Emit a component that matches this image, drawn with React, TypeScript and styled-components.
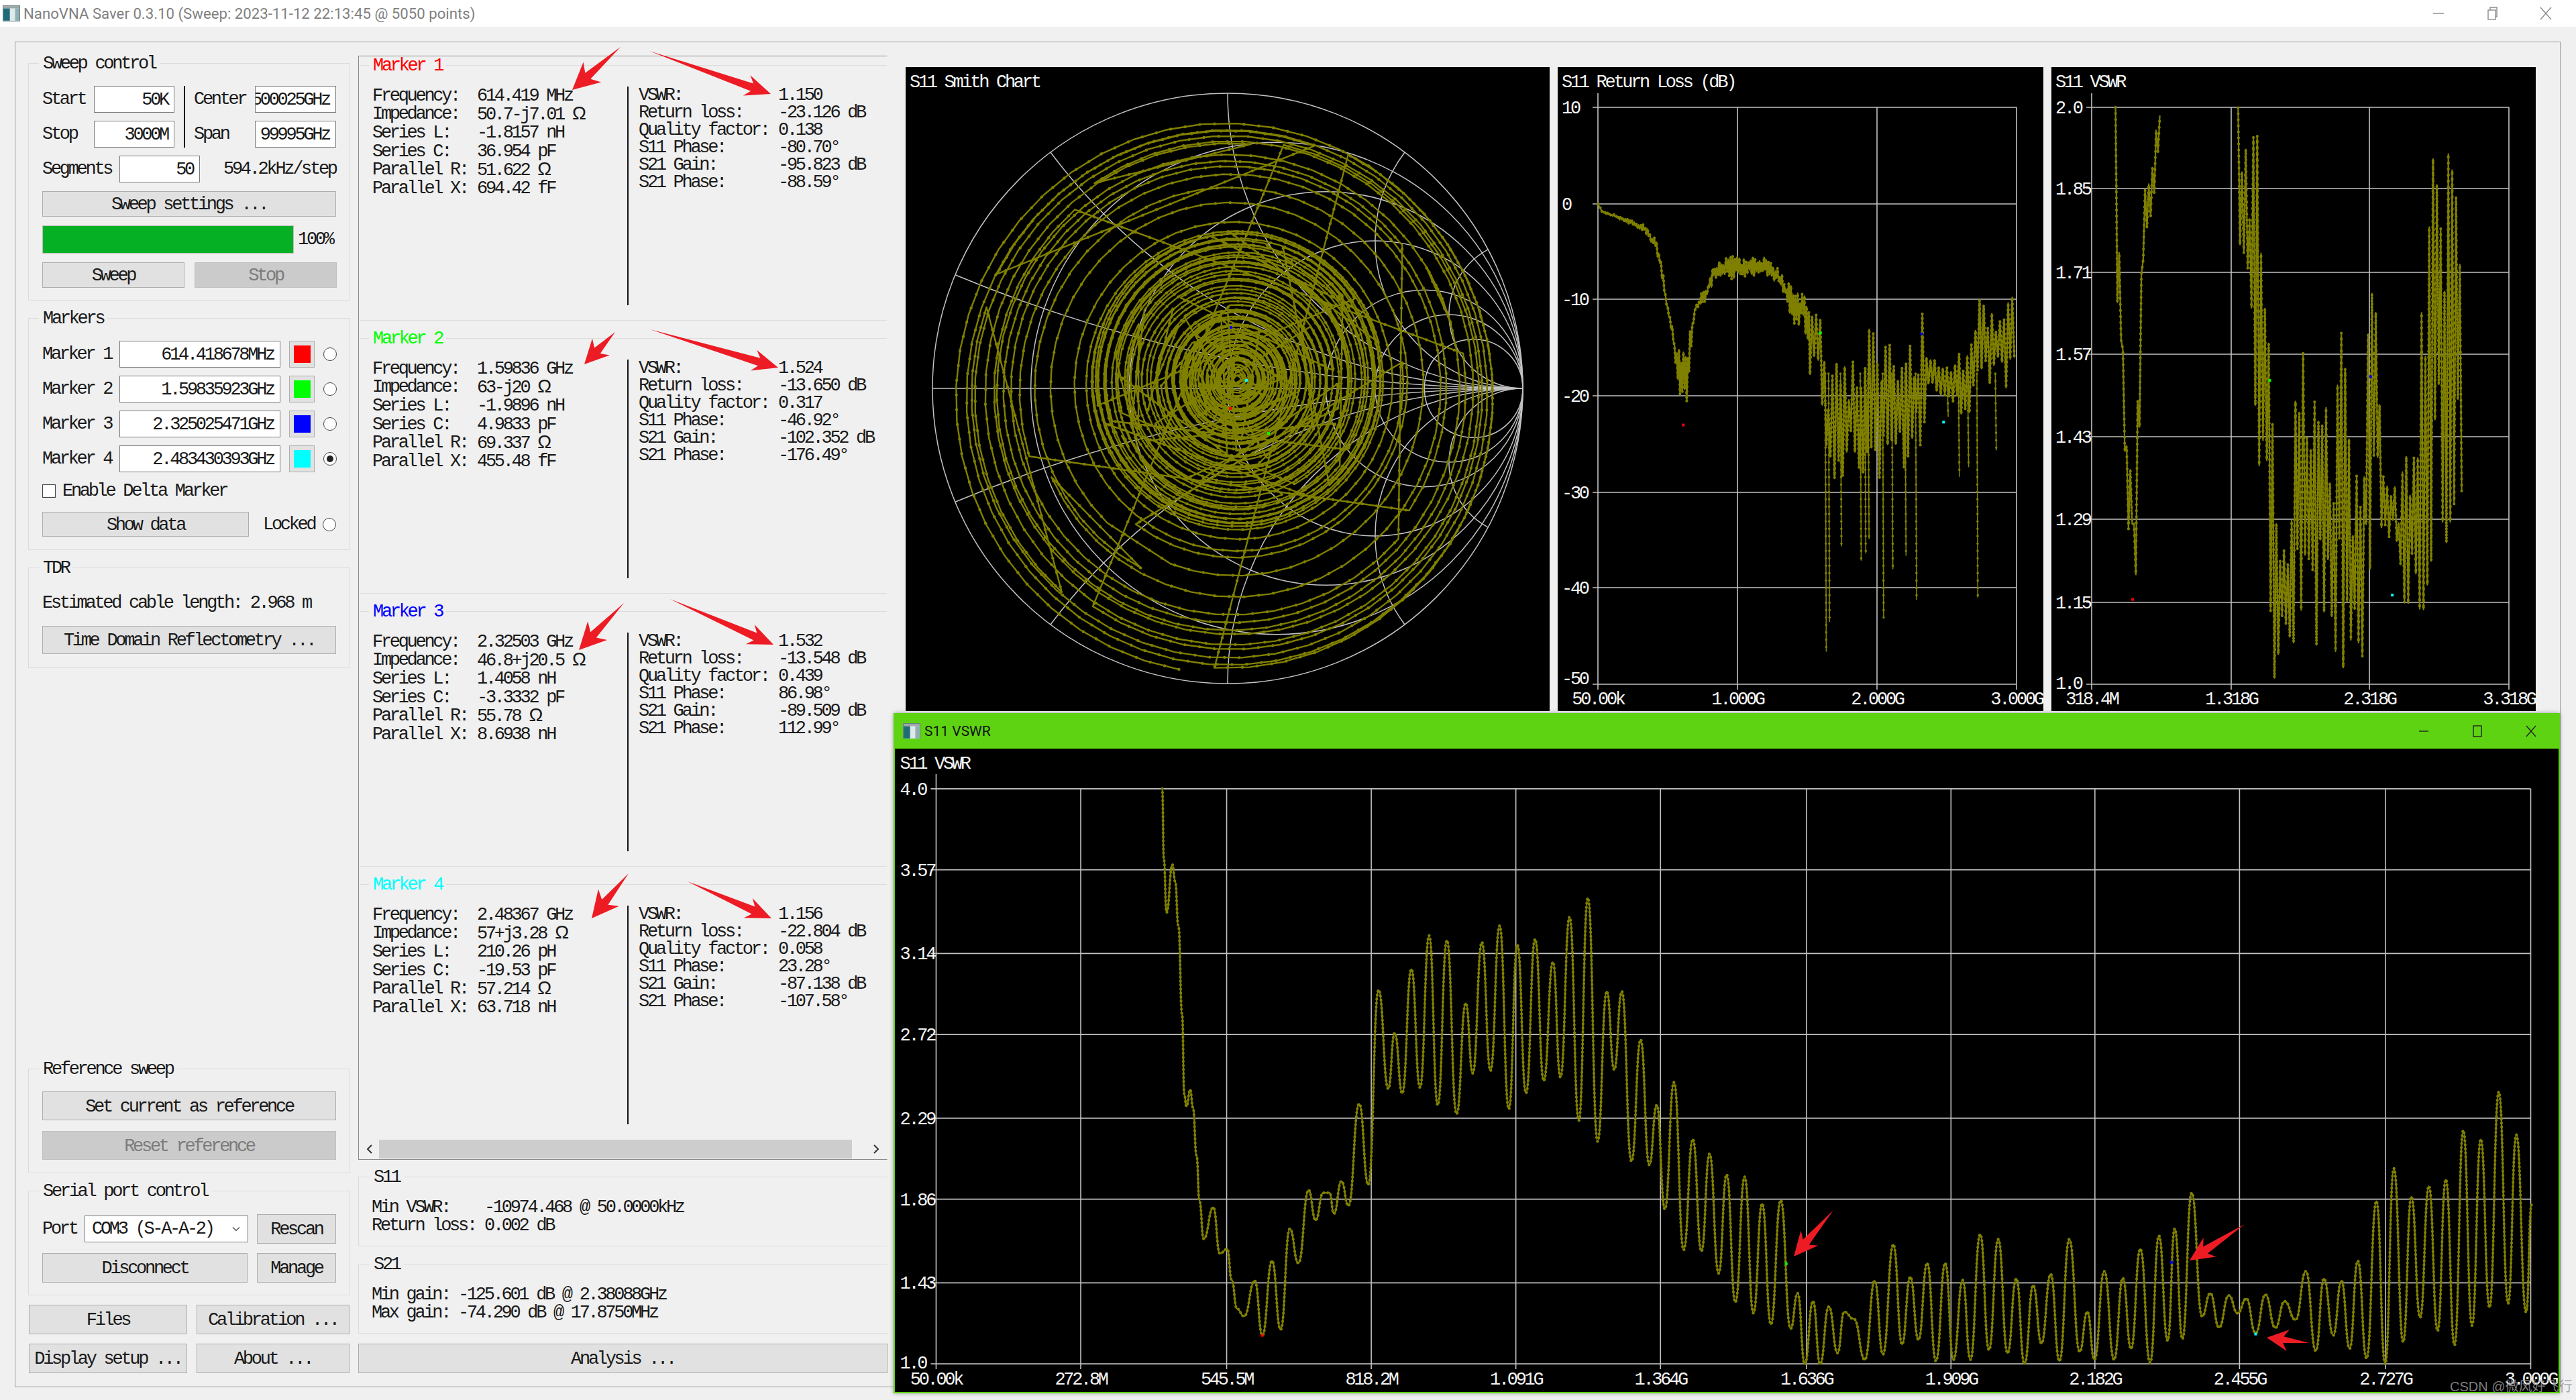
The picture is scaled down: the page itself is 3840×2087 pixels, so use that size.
import React, { useMemo } from "react";
import styled, { createGlobalStyle } from "styled-components";

const Global = createGlobalStyle`
  html, body { margin: 0; padding: 0; background: #f0f0f0; overflow: hidden; }
  * { box-sizing: border-box; }
`;

const MONO = `"Liberation Mono", "DejaVu Sans Mono", monospace`;
const OLIVE = "#808000";
const GRID = "#c2c2c2";

const Page = styled.div`
  position: relative;
  width: 3840px;
  height: 2087px;
  overflow: hidden;
  background: #f0f0f0;
  color: #1a1a1a;
  font-family: ${MONO};
  font-size: 27px;
  letter-spacing: -3.3px;
  line-height: 26px;
  white-space: pre;
`;

const TitleBar = styled.div`
  height: 40px;
  background: #fff;
  display: flex;
  align-items: center;
  padding: 0 0 0 4px;
  gap: 5px;
  font-family: "Roboto", "Liberation Sans", sans-serif;
  font-size: 22.2px;
  letter-spacing: 0;
  color: #808080;
`;
const TitleText = styled.span`
  flex: 1;
`;
const WinControls = styled.div`
  display: flex;
  align-items: center;
  gap: 56px;
  margin-right: 33px;
`;
const Frame = styled.div`
  margin: 22px 23px 0 22px;
  height: 2006px;
  border: 1px solid #9c9c9c;
  background: #f0f0f0;
  display: flex;
  padding-left: 19px;
`;

const LeftCol = styled.div`
  width: 480px;
  flex: none;
  display: flex;
  flex-direction: column;
  padding: 31px 0 20px;
`;
const MidCol = styled.div`
  width: 789px;
  flex: none;
  margin-left: 12px;
  display: flex;
  flex-direction: column;
  padding: 20px 0 20px;
`;
const ChartRow = styled.div`
  margin: 37px 0 0 27px;
  display: flex;
  gap: 12px;
  align-items: flex-start;
`;

const Group = styled.div<{ $h: number; $top?: number }>`
  height: ${(p) => p.$h}px;
  margin-top: ${(p) => p.$top ?? 0}px;
  border: 1px solid #dcdcdc;
  padding: 0 20px;
  flex: none;
`;
const Legend = styled.div<{ $color?: string }>`
  width: fit-content;
  height: 26px;
  margin: -13px 0 0 -5px;
  padding: 0 6px;
  background: #f0f0f0;
  color: ${(p) => p.$color ?? "#1a1a1a"};
`;
const Spacer = styled.div`
  flex: 1;
`;

const SweepGrid = styled.div`
  margin-top: 20px;
  display: grid;
  grid-template-columns: 77px 120px 29px 91px 121px;
  grid-auto-rows: 40px;
  row-gap: 12px;
  align-items: center;
`;
const VLine = styled.div`
  grid-row: 1 / span 2;
  grid-column: 3;
  justify-self: center;
  width: 2px;
  height: 92px;
  background: #000;
`;
const Field = styled.div<{ $w?: number }>`
  width: ${(p) => (p.$w ? `${p.$w}px` : "100%")};
  height: 40px;
  background: #fff;
  border: 1px solid #7a7a7a;
  padding: 1px 9px 0 0;
  display: flex;
  align-items: center;
  justify-content: flex-end;
  overflow: hidden;
  flex: none;
`;
const FieldText = styled.span`
  flex: none;
`;
const SegRow = styled.div`
  margin-top: 12px;
  display: flex;
  align-items: center;
  height: 40px;
`;
const SegLabel = styled.span`
  width: 115px;
  flex: none;
`;
const StepText = styled.span`
  margin-left: 35px;
`;
const Btn = styled.div<{ $h?: number; $w?: number; $off?: boolean; $top?: number }>`
  width: ${(p) => (p.$w ? `${p.$w}px` : "100%")};
  height: ${(p) => p.$h ?? 38}px;
  margin-top: ${(p) => p.$top ?? 0}px;
  padding-top: 2px;
  flex: none;
  background: ${(p) => (p.$off ? "#cbcbcb" : "#e1e1e1")};
  border: 1px solid ${(p) => (p.$off ? "#c0c0c0" : "#adadad")};
  color: ${(p) => (p.$off ? "#7c7c7c" : "#1a1a1a")};
  display: flex;
  align-items: center;
  justify-content: center;
`;
const ProgressRow = styled.div`
  margin-top: 13px;
  display: flex;
  align-items: center;
  gap: 6px;
  height: 42px;
`;
const Progress = styled.div`
  width: 375px;
  height: 42px;
  background: #06b025;
  border: 1px solid #bcbcbc;
`;
const TwoBtns = styled.div`
  margin-top: 13px;
  display: flex;
  gap: 15px;
`;
const MarkerGrid = styled.div`
  margin-top: 20px;
  display: grid;
  grid-template-columns: 102px 240px 38px 20px;
  grid-auto-rows: 40px;
  column-gap: 13px;
  row-gap: 12px;
  align-items: center;
`;
const ColorBtn = styled.div<{ $c: string }>`
  width: 38px;
  height: 40px;
  background: #e1e1e1;
  border: 1px solid #adadad;
  display: flex;
  align-items: center;
  justify-content: center;
  &::after {
    content: "";
    width: 25px;
    height: 26px;
    background: ${(p) => p.$c};
  }
`;
const Radio = styled.div<{ $on?: boolean }>`
  width: 20px;
  height: 20px;
  flex: none;
  border-radius: 50%;
  background: #fff;
  border: 1px solid #444;
  display: flex;
  align-items: center;
  justify-content: center;
  &::after {
    content: "";
    width: 10px;
    height: 10px;
    border-radius: 50%;
    background: ${(p) => (p.$on ? "#222" : "transparent")};
  }
`;
const CheckRow = styled.div`
  margin-top: 18px;
  height: 20px;
  display: flex;
  align-items: center;
  gap: 10px;
`;
const Check = styled.div`
  width: 20px;
  height: 20px;
  flex: none;
  background: #fff;
  border: 1px solid #444;
`;
const ShowRow = styled.div`
  margin-top: 21px;
  display: flex;
  align-items: center;
`;
const LockText = styled.span`
  margin: 0 12px 0 21px;
`;
const Line = styled.div<{ $top?: number }>`
  height: 26px;
  margin-top: ${(p) => p.$top ?? 0}px;
`;
const PortRow = styled.div`
  margin-top: 21px;
  display: flex;
  align-items: center;
  gap: 13px;
`;
const PortLabel = styled.span`
  width: 63px;
  margin-right: -13px;
  flex: none;
`;
const Combo = styled.div`
  width: 244px;
  height: 40px;
  flex: none;
  background: #fff;
  border: 1px solid #7a7a7a;
  padding: 0 10px;
  display: flex;
  align-items: center;
  justify-content: space-between;
`;
const DiscRow = styled.div`
  margin-top: 14px;
  display: flex;
  gap: 14px;
`;
const BottomGrid = styled.div`
  margin: 14px 0 0 1px;
  display: grid;
  grid-template-columns: 236px 228px;
  grid-auto-rows: 44px;
  column-gap: 14px;
  row-gap: 14px;
`;

const ScrollPanel = styled.div`
  height: 1646px;
  flex: none;
  border: 1px solid #8a8a8a;
  border-right-color: #f0f0f0;
  display: flex;
  flex-direction: column;
`;
const ScrollArea = styled.div`
  flex: 1;
  min-height: 0;
  overflow: hidden;
  padding-top: 13px;
`;
const MarkerBox = styled.div`
  height: 381px;
  margin-bottom: 26px;
  margin-left: 1px;
  border-top: 1px solid #dcdcdc;
  border-bottom: 1px solid #dcdcdc;
  padding-left: 19px;
`;
const MarkerBody = styled.div`
  margin-top: 18px;
  display: grid;
  grid-template-columns: 380px 2px 1fr;
`;
const LeftStats = styled.div`
  display: grid;
  grid-template-columns: 156px 1fr;
  grid-auto-rows: 27.6px;
  align-items: center;
  align-content: start;
`;
const RightStats = styled.div`
  padding-left: 15px;
  display: grid;
  grid-template-columns: 208px 1fr;
  grid-auto-rows: 26px;
  align-items: center;
  align-content: start;
`;
const Divider = styled.div`
  width: 2px;
  height: 326px;
  background: #111;
`;
const Ohm = styled.span`
  font-family: "Liberation Sans", sans-serif;
  font-size: 28px;
  letter-spacing: 0;
`;
const ScrollBar = styled.div`
  height: 31px;
  flex: none;
  display: flex;
  align-items: center;
  padding: 0 10px;
  background: #f0f0f0;
  svg:last-child {
    margin-left: auto;
  }
`;
const Thumb = styled.div`
  width: 705px;
  height: 28px;
  margin-left: 8px;
  background: #cdcdcd;
`;
const SumGroup = styled.div<{ $top: number }>`
  height: 104px;
  flex: none;
  margin-top: ${(p) => p.$top}px;
  border-top: 1px solid #dcdcdc;
  border-bottom: 1px solid #dcdcdc;
  border-left: 1px solid #dcdcdc;
  padding-left: 20px;
`;
const SumLegend = styled(Legend)`
  margin-left: -4px;
`;
const SumBody = styled.div`
  margin: 19px 0 0 -1px;
`;
const SumRow = styled.div`
  height: 26.5px;
  display: flex;
  align-items: center;
`;
const SumLabel = styled.span`
  width: 168px;
  flex: none;
`;

const ChartBox = styled.div<{ $w: number; $h: number }>`
  width: ${(p) => p.$w}px;
  height: ${(p) => p.$h}px;
  flex: none;
  background: #000;
`;
const ChartSvg = styled.svg<{ $grow?: boolean }>`
  display: block;
  width: 100%;
  height: 100%;
  ${(p) => (p.$grow ? "flex: 1; min-height: 0;" : "")}
  text {
    fill: #f4f4f4;
    font-family: ${MONO};
    font-size: 27px;
    letter-spacing: -3.3px;
    white-space: pre;
  }
`;

const ChildWindow = styled.div`
  position: absolute;
  left: 1332px;
  top: 1063px;
  width: 2484px;
  height: 1014px;
  background: #000;
  border: 2px solid #5dd312;
  border-top: none;
  box-shadow: 0 0 6px rgba(0, 0, 0, 0.35);
  display: flex;
  flex-direction: column;
`;
const ChildTitle = styled.div`
  height: 53px;
  flex: none;
  margin: 0 -2px;
  background: #5dd312;
  display: flex;
  align-items: center;
  padding: 0 0 0 14px;
  gap: 6px;
  font-family: "Roboto", "Liberation Sans", sans-serif;
  font-size: 21px;
  letter-spacing: 0;
  color: #111;
`;
const ChildControls = styled.div`
  margin-left: auto;
  display: flex;
  align-items: center;
  gap: 60px;
  margin-right: 33px;
`;
const Watermark = styled.div`
  position: absolute;
  left: 3652px;
  top: 2053px;
  font-family: "Liberation Sans", "Noto Sans CJK SC", sans-serif;
  font-size: 20px;
  letter-spacing: 0;
  color: rgba(150, 150, 150, 0.85);
  line-height: 28px;
`;
const ArrowLayer = styled.svg`
  position: absolute;
  left: 0;
  top: 0;
  width: 3840px;
  height: 2087px;
  pointer-events: none;
`;

/* ---------- data helpers ---------- */
type Pt = [number, number];

function prng(seed: number) {
  let s = seed;
  return () => {
    s = (s * 16807) % 2147483647;
    return (s - 1) / 2147483646;
  };
}

function arrowPoints(t: Pt, p: Pt, L = 40, hw = 20, neck = 6) {
  const dx = p[0] - t[0];
  const dy = p[1] - t[1];
  const len = Math.hypot(dx, dy);
  const d: Pt = [dx / len, dy / len];
  const n: Pt = [-d[1], d[0]];
  const at = (back: number, side: number) =>
    `${(p[0] - d[0] * back + n[0] * side).toFixed(1)},${(p[1] - d[1] * back + n[1] * side).toFixed(1)}`;
  return [
    at(0, 0),
    at(L, hw),
    at(L * 0.78, neck),
    `${t[0]},${t[1]}`,
    at(L * 0.78, -neck),
    at(L, -hw),
  ].join(" ");
}

const ARROWS: { t: Pt; p: Pt; L?: number; hw?: number; neck?: number }[] = [
  { t: [925, 70], p: [853, 134] },
  { t: [968, 76], p: [1149, 140], L: 38, hw: 16 },
  { t: [917, 495], p: [871, 543], L: 36, hw: 18 },
  { t: [969, 491], p: [1160, 548], L: 38, hw: 16 },
  { t: [930, 899], p: [863, 969] },
  { t: [999, 893], p: [1153, 961], L: 38, hw: 16 },
  { t: [937, 1302], p: [882, 1369] },
  { t: [1025, 1314], p: [1150, 1369], L: 38, hw: 16 },
  { t: [2733, 1804], p: [2674, 1873], L: 36, hw: 17 },
  { t: [3346, 1825], p: [3264, 1879], L: 36, hw: 17 },
  { t: [3442, 2002], p: [3379, 1994], L: 32, hw: 16, neck: 5 },
];

function smithGrid(cx: number, cy: number, R: number) {
  const circles = [0.2, 0.5, 1, 2, 3, 5].map((r) => ({
    cx: cx + (R * r) / (1 + r),
    cy,
    r: R / (1 + r),
  }));
  const arcs: string[] = [];
  for (const x of [0.2, 0.5, 1, 2, 4]) {
    const gx = (x * x - 1) / (x * x + 1);
    const gy = (2 * x) / (x * x + 1);
    const r = R / x;
    arcs.push(`M${cx + R} ${cy}A${r} ${r} 0 0 1 ${cx + gx * R} ${cy - gy * R}`);
    arcs.push(`M${cx + R} ${cy}A${r} ${r} 0 0 0 ${cx + gx * R} ${cy + gy * R}`);
  }
  return { circles, arcs };
}

function smithTrace() {
  const rnd = prng(4242);
  const radii = [
    404, 396, 388, 383, 371, 365, 352, 344, 333, 320, 300, 276, 250, 232, 219, 216, 213, 210, 206, 203,
    199, 195, 190, 186, 182, 176, 170, 166, 162, 158, 152, 146, 140, 135, 130, 125, 120, 116, 112, 106,
    102, 98, 95, 92, 89, 86, 83, 80, 77, 75, 72, 70, 67, 65, 62, 60, 57, 55, 52, 50, 47, 45, 42, 40, 37,
    35, 32, 30, 27, 25, 22, 18, 14, 10, 6,
  ];
  const pts: string[] = [];
  radii.forEach((r0, i) => {
    const r1 = radii[i + 1] ?? r0;
    const k = Math.min(1, Math.max(0, (404 - r0) / 190));
    const cx = 1830 + k * 14 + (rnd() - 0.5) * 6;
    const cy = 589 - k * 23 + (rnd() - 0.5) * 6;
    const ph = rnd() * 6.28;
    for (let a = 0; a < 48; a++) {
      const t = a / 48;
      const th = ph + t * Math.PI * 2;
      const rr = r0 + (r1 - r0) * t;
      const x = cx + rr * Math.cos(th);
      const y = cy + rr * 1.02 * Math.sin(th);
      pts.push(`${x.toFixed(1)} ${y.toFixed(1)}`);
    }
  });
  return `M${pts.join("L")}`;
}

type Env = [number, number, number];
function bandPath(
  env: Env[],
  step: (x: number) => number,
  seed: number,
  map: (x: number, y: number) => Pt
) {
  const rnd = prng(seed);
  const out: string[] = [];
  let seg = 0;
  let up = false;
  const end = env[env.length - 1][0];
  for (let x = env[0][0]; x <= end; x += step(x)) {
    while (seg < env.length - 2 && env[seg + 1][0] < x) seg++;
    const a = env[seg];
    const b = env[seg + 1];
    const t = Math.min(1, (x - a[0]) / (b[0] - a[0]));
    const hi = a[1] + (b[1] - a[1]) * t;
    const lo = a[2] + (b[2] - a[2]) * t;
    up = !up;
    const span = lo - hi;
    const y = up ? hi + span * rnd() * 0.42 : lo - span * rnd() * 0.42;
    const [px, py] = map(x, y);
    out.push(`${px.toFixed(1)} ${py.toFixed(1)}`);
  }
  return `M${out.join("L")}`;
}

const z4 = (x: number, y: number): Pt => [2300 + x / 1.018, y / 1.4];

const RL_ENV: Env[] = [
  [84, 425, 428], [90, 440, 445], [110, 448, 455], [130, 458, 468], [155, 470, 485], [172, 500, 525],
  [180, 545, 575], [187, 620, 640], [195, 665, 690], [203, 720, 800], [213, 700, 885], [220, 700, 850],
  [226, 670, 700], [232, 630, 650], [250, 590, 625], [260, 550, 580], [280, 535, 585], [310, 535, 580],
  [340, 528, 575], [360, 565, 600], [380, 600, 680], [395, 605, 680], [405, 640, 800], [420, 640, 830],
  [430, 770, 1000], [440, 780, 1000], [455, 720, 1030], [480, 690, 1000], [505, 660, 1000], [530, 670, 1000],
  [560, 680, 1000], [580, 630, 910], [590, 750, 810], [610, 750, 830], [630, 720, 880], [650, 700, 900],
  [665, 610, 840], [690, 600, 830], [705, 580, 820], [718, 610, 790],
];
const RL_SPIKES: Pt[] = [
  [430, 1360], [435, 1298], [453, 1140], [483, 1170], [490, 1155], [495, 1125], [517, 1290], [531, 1188],
  [551, 1160], [567, 1252], [632, 995], [646, 975], [660, 1247], [688, 940], [615, 870],
];
const SW_A: Env[] = [
  [869, 224, 640], [873, 430, 640], [878, 640, 730], [882, 730, 1000], [886, 900, 1100], [893, 1000, 1120],
  [897, 1000, 1250], [901, 770, 1200], [907, 570, 790], [912, 340, 520], [920, 330, 470], [928, 270, 420], [938, 224, 300],
];
const SW_B: Env[] = [
  [1055, 224, 450], [1065, 224, 700], [1075, 224, 850], [1085, 240, 1030], [1095, 400, 1110], [1100, 390, 1180],
  [1110, 1060, 1420], [1118, 1090, 1350], [1130, 1100, 1300], [1138, 900, 1380], [1148, 670, 1390], [1160, 790, 1290],
  [1180, 600, 1400], [1190, 640, 1390], [1200, 870, 1400], [1215, 640, 1400], [1225, 950, 1390], [1240, 900, 1400],
  [1252, 610, 1300], [1258, 570, 1270], [1265, 340, 1000], [1272, 980, 1100], [1280, 1000, 1150], [1292, 985, 1100],
  [1300, 1050, 1240], [1310, 850, 1335], [1320, 900, 1250], [1328, 780, 1380], [1338, 400, 1390], [1345, 224, 1290],
  [1360, 260, 1140], [1372, 224, 1180], [1385, 224, 1140], [1397, 224, 1110],
];

const Z5: Pt[] = [
  [511, 190], [514, 350], [519, 470], [530, 362], [535, 400], [541, 500], [548, 700], [552, 880], [556, 908], [563, 870],
  [568, 910], [575, 1020], [580, 1120], [588, 1207], [606, 1136], [618, 1240], [632, 1230], [640, 1300], [650, 1365],
  [663, 1382], [683, 1302], [697, 1425], [715, 1257], [731, 1412], [748, 1184], [764, 1262], [783, 1097], [796, 1165],
  [810, 1103], [822, 1103], [830, 1150], [844, 1077], [857, 1132], [877, 902], [894, 1085], [913, 645], [931, 868],
  [943, 742], [957, 878], [974, 598], [990, 865], [1007, 522], [1023, 905], [1040, 533], [1058, 925], [1075, 675],
  [1088, 833], [1105, 537], [1121, 827], [1138, 500], [1155, 914], [1171, 543], [1187, 878], [1204, 530], [1220, 850],
  [1237, 582], [1251, 842], [1268, 480], [1285, 940], [1302, 437], [1320, 987], [1337, 648], [1351, 825], [1365, 648],
  [1383, 1032], [1400, 757], [1416, 1040], [1430, 905], [1445, 1140], [1462, 853], [1480, 1232], [1497, 982],
  [1513, 1235], [1528, 1015], [1545, 1285],
];
const Z6: Pt[] = [
  [17, 1062], [33, 1350], [50, 1067], [66, 1375], [82, 1128], [98, 1400], [116, 1120], [134, 1410], [147, 1330], [160, 1490],
  [175, 1348], [188, 1490], [204, 1360], [220, 1465], [232, 1372], [250, 1388], [270, 1480], [288, 1302], [303, 1468],
  [322, 1220], [338, 1445], [353, 1293], [368, 1435], [384, 1262], [400, 1483], [417, 1262], [432, 1480], [449, 1300],
  [463, 1480], [481, 1197], [497, 1458], [514, 1208], [531, 1465], [547, 1297], [562, 1490], [578, 1312], [593, 1443],
  [610, 1287], [626, 1483], [644, 1208], [663, 1462], [677, 1372], [690, 1480], [708, 1280], [726, 1480], [742, 1296],
  [757, 1455], [774, 1230], [792, 1487], [808, 1200], [824, 1437], [837, 1184], [851, 1433], [868, 1103], [887, 1382],
  [902, 1330], [918, 1407], [936, 1335], [952, 1375], [968, 1342], [985, 1420], [1003, 1333], [1021, 1408], [1038, 1348],
  [1058, 1390], [1077, 1280], [1095, 1460], [1110, 1297], [1127, 1425], [1142, 1302], [1157, 1455], [1172, 1257],
  [1188, 1477], [1206, 1122], [1222, 1490], [1238, 1048], [1255, 1440], [1270, 1112], [1286, 1385], [1302, 1088],
  [1318, 1415], [1333, 1073], [1349, 1447], [1365, 962], [1381, 1403], [1397, 982], [1413, 1362], [1430, 875],
  [1447, 1353], [1462, 972], [1480, 1373], [1490, 1130],
];
const z5 = (p: Pt): Pt => [1320 + p[0] / 1.244, 1050 + p[1] / 1.512];
const z6 = (p: Pt): Pt => [2560 + p[0] / 1.225, 1050 + p[1] / 1.512];

function smoothPath(pts: Pt[]) {
  let d = `M${pts[0][0].toFixed(1)} ${pts[0][1].toFixed(1)}`;
  for (let i = 1; i < pts.length; i++) {
    const [x0, y0] = pts[i - 1];
    const [x1, y1] = pts[i];
    const m = (x0 + x1) / 2;
    d += `C${m.toFixed(1)} ${y0.toFixed(1)} ${m.toFixed(1)} ${y1.toFixed(1)} ${x1.toFixed(1)} ${y1.toFixed(1)}`;
  }
  return d;
}

const Trace: React.FC<{ d: string; w?: number; dash?: number }> = ({ d, w = 2, dash = 9 }) => (
  <g fill="none" stroke={OLIVE} strokeLinejoin="round">
    <path d={d} strokeWidth={w} />
    <path d={d} strokeWidth={w + 2} strokeLinecap="round" strokeDasharray={`0.01 ${dash}`} />
  </g>
);

const Dot: React.FC<{ p: Pt; c: string }> = ({ p, c }) => <rect x={p[0] - 2} y={p[1] - 2} width={4} height={4} fill={c} />;

interface PlotProps {
  ys: { y: number; t: string; ty?: number }[];
  xs: { x: number; t: string }[];
  axisX: number;
  top: number;
  bottom: number;
  right: number;
  labelX: number;
  labelY: number;
  axisTop: number;
}
const Plot: React.FC<PlotProps> = ({ ys, xs, axisX, top, bottom, right, labelX, labelY, axisTop }) => (
  <>
    <g stroke={GRID} strokeWidth={1.6}>
      <line x1={axisX} x2={axisX} y1={axisTop} y2={bottom + 8} />
      {xs.slice(1).map((v) => (
        <line key={v.x} x1={v.x} x2={v.x} y1={top} y2={bottom + 8} />
      ))}
      {ys.map((v) => (
        <line key={v.y} x1={axisX - 8} x2={right} y1={v.y} y2={v.y} />
      ))}
    </g>
    {ys.map((v) => (
      <text key={v.t} x={labelX} y={v.y + 9 + (v.ty ?? 0)}>
        {v.t}
      </text>
    ))}
    {xs.map((v) => (
      <text key={v.t} x={v.x} y={labelY} textAnchor="middle">
        {v.t}
      </text>
    ))}
  </>
);

/* ---------- content ---------- */
const OHM = "Ω";
const MARKERS = [
  {
    name: "Marker 1", color: "#ff0000",
    left: ["614.419 MHz", `50.7-j7.01 ${OHM}`, "-1.8157 nH", "36.954 pF", `51.622 ${OHM}`, "694.42 fF"],
    right: ["1.150", "-23.126 dB", "0.138", "-80.70°", "-95.823 dB", "-88.59°"],
  },
  {
    name: "Marker 2", color: "#00ff00",
    left: ["1.59836 GHz", `63-j20 ${OHM}`, "-1.9896 nH", "4.9833 pF", `69.337 ${OHM}`, "455.48 fF"],
    right: ["1.524", "-13.650 dB", "0.317", "-46.92°", "-102.352 dB", "-176.49°"],
  },
  {
    name: "Marker 3", color: "#0000ff",
    left: ["2.32503 GHz", `46.8+j20.5 ${OHM}`, "1.4058 nH", "-3.3332 pF", `55.78 ${OHM}`, "8.6938 nH"],
    right: ["1.532", "-13.548 dB", "0.439", "86.98°", "-89.509 dB", "112.99°"],
  },
  {
    name: "Marker 4", color: "#00ffff",
    left: ["2.48367 GHz", `57+j3.28 ${OHM}`, "210.26 pH", "-19.53 pF", `57.214 ${OHM}`, "63.718 nH"],
    right: ["1.156", "-22.804 dB", "0.058", "23.28°", "-87.138 dB", "-107.58°"],
  },
];
const LEFT_LABELS = ["Frequency:", "Impedance:", "Series L:", "Series C:", "Parallel R:", "Parallel X:"];
const RIGHT_LABELS = ["VSWR:", "Return loss:", "Quality factor:", "S11 Phase:", "S21 Gain:", "S21 Phase:"];
const MARKER_INPUTS: [string, string, string, boolean][] = [
  ["Marker 1", "614.418678MHz", "#ff0000", false],
  ["Marker 2", "1.59835923GHz", "#00ff00", false],
  ["Marker 3", "2.325025471GHz", "#0000ff", false],
  ["Marker 4", "2.483430393GHz", "#00ffff", true],
];

const AppIcon: React.FC<{ s: number }> = ({ s }) => (
  <svg width={s} height={s * 0.92} viewBox="0 0 24 22">
    <rect x="0.5" y="0.5" width="23" height="21" fill="#e8eef0" stroke="#6b7b80" />
    <rect x="1" y="4" width="9" height="17" fill="#1f6b78" />
    <rect x="10" y="4" width="7" height="17" fill="#dfe9e9" />
    <rect x="17" y="4" width="6" height="17" fill="#8fb0b5" />
    <rect x="1" y="1" width="22" height="3" fill="#9aa6a8" />
  </svg>
);

const Val: React.FC<{ v: string }> = ({ v }) => {
  if (v.endsWith(OHM)) {
    return (
      <span>
        {v.slice(0, -1)}
        <Ohm>{OHM}</Ohm>
      </span>
    );
  }
  return <span>{v}</span>;
};

export default function App() {
  const smith = useMemo(() => {
    const g = smithGrid(1830, 579, 440);
    return { ...g, trace: smithTrace() };
  }, []);
  const rl = useMemo(() => bandPath(RL_ENV, (x) => (x < 405 ? 1.7 : 3.1), 77, z4), []);
  const rlSp = useMemo(
    () =>
      RL_SPIKES.map((s) => {
        const a = z4(s[0] - 1.5, 780);
        const b = z4(s[0], s[1]);
        return `M${a[0].toFixed(1)} ${a[1].toFixed(1)}L${b[0].toFixed(1)} ${b[1].toFixed(1)}`;
      }).join(""),
    []
  );
  const swA = useMemo(() => bandPath(SW_A, () => 2.8, 31, z4), []);
  const swB = useMemo(() => bandPath(SW_B, () => 2.9, 913, z4), []);
  const big = useMemo(() => smoothPath([...Z5.map(z5), ...Z6.map(z6)]), []);

  return (
    <Page>
      <Global />
      <TitleBar>
        <AppIcon s={26} />
        <TitleText>NanoVNA Saver 0.3.10 (Sweep: 2023-11-12 22:13:45 @ 5050 points)</TitleText>
        <WinControls>
          <svg width="24" height="24" viewBox="0 0 24 24" fill="none" stroke="#8a8a8a" strokeWidth="1.4">
            <path d="M4 12h16" />
          </svg>
          <svg width="24" height="24" viewBox="0 0 24 24" fill="none" stroke="#8a8a8a" strokeWidth="1.4">
            <rect x="6" y="7" width="11" height="14" />
            <path d="M9 7V3h10v14h-2" />
          </svg>
          <svg width="24" height="24" viewBox="0 0 24 24" fill="none" stroke="#8a8a8a" strokeWidth="1.4">
            <path d="M4 3l16 18M20 3L4 21" />
          </svg>
        </WinControls>
      </TitleBar>
      <Frame>
        <LeftCol>
          <Group $h={354}>
            <Legend>Sweep control</Legend>
            <SweepGrid>
              <span>Start</span>
              <Field><FieldText>50K</FieldText></Field>
              <VLine />
              <span>Center</span>
              <Field><FieldText>500025GHz</FieldText></Field>
              <span>Stop</span>
              <Field><FieldText>3000M</FieldText></Field>
              <span>Span</span>
              <Field><FieldText>99995GHz</FieldText></Field>
            </SweepGrid>
            <SegRow>
              <SegLabel>Segments</SegLabel>
              <Field $w={120}><FieldText>50</FieldText></Field>
              <StepText>594.2kHz/step</StepText>
            </SegRow>
            <Btn $top={13}>Sweep settings ...</Btn>
            <ProgressRow>
              <Progress />
              <span>100%</span>
            </ProgressRow>
            <TwoBtns>
              <Btn $w={212}>Sweep</Btn>
              <Btn $w={212} $off>Stop</Btn>
            </TwoBtns>
          </Group>
          <Group $h={346} $top={26}>
            <Legend>Markers</Legend>
            <MarkerGrid>
              {MARKER_INPUTS.map(([n, v, c, on]) => (
                <React.Fragment key={n}>
                  <span>{n}</span>
                  <Field><FieldText>{v}</FieldText></Field>
                  <ColorBtn $c={c} />
                  <Radio $on={on} />
                </React.Fragment>
              ))}
            </MarkerGrid>
            <CheckRow>
              <Check />
              <span>Enable Delta Marker</span>
            </CheckRow>
            <ShowRow>
              <Btn $w={308} $h={37}>Show data</Btn>
              <LockText>Locked</LockText>
              <Radio />
            </ShowRow>
          </Group>
          <Group $h={150} $top={26}>
            <Legend>TDR</Legend>
            <Line $top={26}>Estimated cable length: 2.968 m</Line>
            <Btn $h={42} $top={21}>Time Domain Reflectometry ...</Btn>
          </Group>
          <Spacer />
          <Group $h={156}>
            <Legend>Reference sweep</Legend>
            <Btn $h={43} $top={20}>Set current as reference</Btn>
            <Btn $h={43} $top={16} $off>Reset reference</Btn>
          </Group>
          <Group $h={156} $top={26}>
            <Legend>Serial port control</Legend>
            <PortRow>
              <PortLabel>Port</PortLabel>
              <Combo>
                <span>COM3 (S-A-A-2)</span>
                <svg width="14" height="10" viewBox="0 0 14 10" fill="none" stroke="#555" strokeWidth="1.5">
                  <path d="M2 2.5l5 5 5-5" />
                </svg>
              </Combo>
              <Btn $w={118} $h={44}>Rescan</Btn>
            </PortRow>
            <DiscRow>
              <Btn $w={306} $h={44}>Disconnect</Btn>
              <Btn $w={118} $h={44}>Manage</Btn>
            </DiscRow>
          </Group>
          <BottomGrid>
            <Btn $h={44}>Files</Btn>
            <Btn $h={44}>Calibration ...</Btn>
            <Btn $h={44}>Display setup ...</Btn>
            <Btn $h={44}>About ...</Btn>
          </BottomGrid>
        </LeftCol>

        <MidCol>
          <ScrollPanel>
            <ScrollArea>
              {MARKERS.map((m) => (
                <MarkerBox key={m.name}>
                  <Legend $color={m.color}>{m.name}</Legend>
                  <MarkerBody>
                    <LeftStats>
                      {LEFT_LABELS.map((l, i) => (
                        <React.Fragment key={l}>
                          <span>{l}</span>
                          <Val v={m.left[i]} />
                        </React.Fragment>
                      ))}
                    </LeftStats>
                    <Divider />
                    <RightStats>
                      {RIGHT_LABELS.map((l, i) => (
                        <React.Fragment key={l}>
                          <span>{l}</span>
                          <span>{m.right[i]}</span>
                        </React.Fragment>
                      ))}
                    </RightStats>
                  </MarkerBody>
                </MarkerBox>
              ))}
            </ScrollArea>
            <ScrollBar>
              <svg width="12" height="18" viewBox="0 0 12 18" fill="none" stroke="#333" strokeWidth="2">
                <path d="M9 3L3 9l6 6" />
              </svg>
              <Thumb />
              <svg width="12" height="18" viewBox="0 0 12 18" fill="none" stroke="#333" strokeWidth="2">
                <path d="M3 3l6 6-6 6" />
              </svg>
            </ScrollBar>
          </ScrollPanel>
          <SumGroup $top={25}>
            <SumLegend>S11</SumLegend>
            <SumBody>
              <SumRow><SumLabel>Min VSWR:</SumLabel><span>-10974.468 @ 50.0000kHz</span></SumRow>
              <SumRow><SumLabel>Return loss:</SumLabel><span>0.002 dB</span></SumRow>
            </SumBody>
          </SumGroup>
          <SumGroup $top={26}>
            <SumLegend>S21</SumLegend>
            <SumBody>
              <SumRow>Min gain: -125.601 dB @ 2.38088GHz</SumRow>
              <SumRow>Max gain: -74.290 dB @ 17.8750MHz</SumRow>
            </SumBody>
          </SumGroup>
          <Btn $h={44} $top={15}>Analysis ...</Btn>
        </MidCol>

        <ChartRow>
          <ChartBox $w={960} $h={960}>
            <ChartSvg viewBox="1350 100 960 960">
              <text x={1356} y={130}>S11 Smith Chart</text>
              <g fill="none" stroke={GRID} strokeWidth={1.5}>
                <circle cx={1830} cy={579} r={440} />
                <line x1={1390} x2={2270} y1={579} y2={579} />
                {smith.circles.map((c) => (
                  <circle key={c.r} cx={c.cx} cy={c.cy} r={c.r} />
                ))}
                {smith.arcs.map((d) => (
                  <path key={d} d={d} />
                ))}
              </g>
              <Trace d={smith.trace} w={2.4} dash={22} />
              <Dot p={[1835, 488]} c="#0000ff" />
              <Dot p={[1834, 609]} c="#ff0000" />
              <Dot p={[1858, 567]} c="#00ffff" />
              <Dot p={[1891, 646]} c="#00ff00" />
            </ChartSvg>
          </ChartBox>
          <ChartBox $w={724} $h={960}>
            <ChartSvg viewBox="2322 100 724 960">
              <text x={2328} y={130}>S11 Return Loss (dB)</text>
              <Plot
                axisX={2382}
                axisTop={139}
                top={160}
                bottom={1020}
                right={3006}
                labelX={2328}
                labelY={1050}
                ys={[
                  { y: 160, t: "10" }, { y: 304, t: "0" }, { y: 446, t: "-10" }, { y: 590, t: "-20" },
                  { y: 734, t: "-30" }, { y: 876, t: "-40" }, { y: 1020, t: "-50", ty: -9 },
                ]}
                xs={[{ x: 2382, t: "50.00k" }, { x: 2590, t: "1.000G" }, { x: 2798, t: "2.000G" }, { x: 3006, t: "3.000G" }]}
              />
              <Trace d={rl} w={2.2} dash={7} />
              <Trace d={rlSp} w={1.6} dash={11} />
              <Dot p={z4(213, 887)} c="#ff0000" />
              <Dot p={z4(421, 695)} c="#00ff00" />
              <Dot p={z4(575, 697)} c="#0000ff" />
              <Dot p={z4(608, 881)} c="#00ffff" />
            </ChartSvg>
          </ChartBox>
          <ChartBox $w={722} $h={960}>
            <ChartSvg viewBox="3058 100 722 960">
              <text x={3064} y={130}>S11 VSWR</text>
              <Plot
                axisX={3118}
                axisTop={139}
                top={160}
                bottom={1020}
                right={3740}
                labelX={3064}
                labelY={1050}
                ys={[
                  { y: 160, t: "2.0" }, { y: 281, t: "1.85" }, { y: 406, t: "1.71" }, { y: 528, t: "1.57" },
                  { y: 651, t: "1.43" }, { y: 774, t: "1.29" }, { y: 898, t: "1.15" }, { y: 1020, t: "1.0", ty: -2 },
                ]}
                xs={[{ x: 3118, t: "318.4M" }, { x: 3326, t: "1.318G" }, { x: 3532, t: "2.318G" }, { x: 3740, t: "3.318G" }]}
              />
              <Trace d={swA} w={2.2} dash={9} />
              <Trace d={swB} w={2.2} dash={9} />
              <Dot p={z4(895, 1251)} c="#ff0000" />
              <Dot p={z4(1103, 794)} c="#00ff00" />
              <Dot p={z4(1256, 786)} c="#0000ff" />
              <Dot p={z4(1289, 1242)} c="#00ffff" />
            </ChartSvg>
          </ChartBox>
        </ChartRow>
      </Frame>

      <ChildWindow>
        <ChildTitle>
          <AppIcon s={26} />
          <span>S11 VSWR</span>
          <ChildControls>
            <svg width="20" height="20" viewBox="0 0 20 20" fill="none" stroke="#222" strokeWidth="1.4">
              <path d="M3 10h14" />
            </svg>
            <svg width="20" height="20" viewBox="0 0 20 20" fill="none" stroke="#222" strokeWidth="1.4">
              <rect x="4" y="2" width="12" height="16" />
            </svg>
            <svg width="20" height="20" viewBox="0 0 20 20" fill="none" stroke="#222" strokeWidth="1.4">
              <path d="M3 2l14 16M17 2L3 18" />
            </svg>
          </ChildControls>
        </ChildTitle>
        <ChartSvg $grow viewBox="1334 1116 2480 961">
          <text x={1339} y={1146}>S11 VSWR</text>
          <Plot
            axisX={1393}
            axisTop={1154}
            top={1176}
            bottom={2035}
            right={3775}
            labelX={1339}
            labelY={2066}
            ys={[
              { y: 1176, t: "4.0" }, { y: 1297, t: "3.57" }, { y: 1422, t: "3.14" }, { y: 1543, t: "2.72" },
              { y: 1668, t: "2.29" }, { y: 1789, t: "1.86" }, { y: 1914, t: "1.43" }, { y: 2035, t: "1.0", ty: -2 },
            ]}
            xs={[
              { x: 1393, t: "50.00k" }, { x: 1609, t: "272.8M" }, { x: 1827, t: "545.5M" }, { x: 2043, t: "818.2M" },
              { x: 2259, t: "1.091G" }, { x: 2475, t: "1.364G" }, { x: 2693, t: "1.636G" }, { x: 2909, t: "1.909G" },
              { x: 3124, t: "2.182G" }, { x: 3340, t: "2.455G" }, { x: 3558, t: "2.727G" }, { x: 3775, t: "3.000G" },
            ]}
          />
          <Trace d={big} w={2.2} dash={6} />
          <Dot p={z5([697, 1425])} c="#ff0000" />
          <Dot p={z6([126, 1263])} c="#00ff00" />
          <Dot p={z6([831, 1260])} c="#0000ff" />
          <Dot p={z6([985, 1422])} c="#00ffff" />
        </ChartSvg>
      </ChildWindow>
      <Watermark>CSDN @微风好飞行</Watermark>
      <ArrowLayer viewBox="0 0 3840 2087">
        {ARROWS.map((a) => (
          <polygon key={`${a.t[0]}-${a.t[1]}`} points={arrowPoints(a.t, a.p, a.L, a.hw, a.neck)} fill="#ed1c24" />
        ))}
      </ArrowLayer>
    </Page>
  );
}
